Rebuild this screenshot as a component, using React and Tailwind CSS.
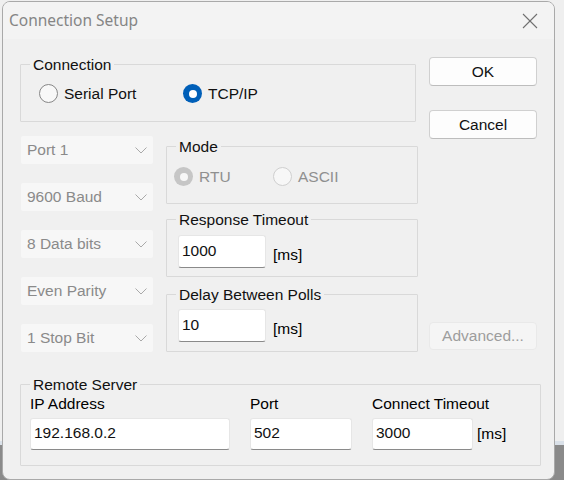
import React from "react";

const F = "font-['Liberation_Sans',Arial,sans-serif]";

function Radio({ checked, disabled, label, className = "" }) {
  let circle;
  if (checked && !disabled) {
    circle = (
      <span className="w-[19px] h-[19px] rounded-full bg-[#005fb8] flex items-center justify-center shrink-0">
        <span className="w-[8px] h-[8px] rounded-full bg-white" />
      </span>
    );
  } else if (checked && disabled) {
    circle = (
      <span className="w-[19px] h-[19px] rounded-full bg-[#c6c6c6] flex items-center justify-center shrink-0">
        <span className="w-[8px] h-[8px] rounded-full bg-[#f7f7f7]" />
      </span>
    );
  } else if (disabled) {
    circle = <span className="w-[19px] h-[19px] rounded-full bg-[#f7f7f7] border border-[#cfcfcf] shrink-0" />;
  } else {
    circle = <span className="w-[19px] h-[19px] rounded-full bg-[#f8f8f8] border border-[#878787] shrink-0" />;
  }
  return (
    <div className={"flex items-center " + className}>
      {circle}
      <span className={"ml-[6px] " + (disabled ? "text-[#8f8f8f]" : "text-[#111]")}>{label}</span>
    </div>
  );
}

function Group({ label, className = "", children }) {
  return (
    <fieldset className={"border border-[#d9d9d9] rounded-[1px] " + className}>
      <legend className="ml-[9px] px-[3px] pt-[2px] leading-[16px] text-[#111]">{label}</legend>
      {children}
    </fieldset>
  );
}

function Combo({ label }) {
  return (
    <div className="h-[28px] w-[132px] bg-[#f7f7f7] rounded-[2px] flex items-center justify-between pl-[6px] pr-[6px] text-[#8a8a8a]">
      <span>{label}</span>
      <svg width="12" height="7" viewBox="0 0 12 7" fill="none">
        <polyline points="0.5,0.5 6,6 11.5,0.5" stroke="#a9a9a9" strokeWidth="1" />
      </svg>
    </div>
  );
}

function Input({ value, className = "" }) {
  return (
    <div
      className={
        "bg-white border border-[#e6e6e6] border-b-[#8a8a8a] rounded-[3px] flex items-center pl-[3px] pb-[2px] text-[#111] " +
        className
      }
    >
      {value}
    </div>
  );
}

function Button({ label, disabled, className = "" }) {
  return (
    <div
      className={
        "w-[108px] rounded-[4px] border flex items-center justify-center " +
        (disabled
          ? "bg-[#f5f5f5] border-[#e9e9e9] text-[#9d9d9d] "
          : "bg-[#fdfdfd] border-[#d0d0d0] border-b-[#bdbdbd] text-[#111] ") +
        className
      }
    >
      {label}
    </div>
  );
}

export default function App() {
  return (
    <div className={"grid w-[564px] h-[480px] overflow-hidden text-[15.5px] leading-[16px] " + F}>
      {/* Desktop behind the dialog */}
      <div className="col-start-1 row-start-1 flex flex-col h-[480px]">
        <div className="h-[441px] bg-[#efefef]" />
        <div className="h-[4px] bg-[#dae1e9]" />
        <div className="flex-1 bg-[#8a8a8a]" />
      </div>

      <div className="col-start-1 row-start-1 pt-[1px] pl-[2px]">
        <div className="w-[553px] h-[479px] rounded-[8px] border border-[#a9a9a9] bg-[#f0f0f0] overflow-hidden">
          {/* Title bar */}
          <div className="h-[37px] bg-[#f3f3f3] flex items-center justify-between pl-[6px] pr-[16px]">
            <span className="font-['Noto_Sans',sans-serif] text-[15.5px] text-[#858585] mt-[-1px]">Connection Setup</span>
            <svg width="16" height="16" viewBox="0 0 16 16" fill="none">
              <line x1="1" y1="1" x2="15" y2="15" stroke="#707070" strokeWidth="1.1" />
              <line x1="15" y1="1" x2="1" y2="15" stroke="#707070" strokeWidth="1.1" />
            </svg>
          </div>

          {/* Body */}
          <div className="pl-[17px] pt-[16px]">
            <div className="flex">
              {/* Left column */}
              <div className="w-[397px]">
                <Group label="Connection" className="w-[396px] h-[67px]">
                  <div className="flex mt-[11px] ml-[18px]">
                    <Radio label="Serial Port" className="w-[144px]" />
                    <Radio label="TCP/IP" checked />
                  </div>
                </Group>

                <div className="flex mt-[15px]">
                  <div className="ml-[1px] mt-[-1px] w-[132px] flex flex-col gap-[19px]">
                    <Combo label="Port 1" />
                    <Combo label="9600 Baud" />
                    <Combo label="8 Data bits" />
                    <Combo label="Even Parity" />
                    <Combo label="1 Stop Bit" />
                  </div>

                  <div className="ml-[13px] w-[252px] flex flex-col">
                    <Group label="Mode" className="w-[252px] h-[67px]">
                      <div className="flex mt-[12px] ml-[7px]">
                        <Radio label="RTU" checked disabled className="w-[99px]" />
                        <Radio label="ASCII" disabled />
                      </div>
                    </Group>

                    <Group label="Response Timeout" className="w-[252px] h-[67px] mt-[6px]">
                      <div className="flex mt-[7px] ml-[11px]">
                        <Input value="1000" className="w-[88px] h-[33px]" />
                        <span className="ml-[7px] self-end mb-[5px]">[ms]</span>
                      </div>
                    </Group>

                    <Group label="Delay Between Polls" className="w-[252px] h-[67px] mt-[8px]">
                      <div className="flex mt-[6px] ml-[11px]">
                        <Input value="10" className="w-[88px] h-[33px]" />
                        <span className="ml-[7px] self-end mb-[5px]">[ms]</span>
                      </div>
                    </Group>
                  </div>
                </div>
              </div>

              {/* Right column */}
              <div className="ml-[12px] flex flex-col">
                <Button label="OK" className="mt-[2px] h-[29px]" />
                <Button label="Cancel" className="mt-[24px] h-[29px]" />
                <Button label="Advanced..." disabled className="mt-[183px] h-[28px]" />
              </div>
            </div>

            {/* Remote Server */}
            <Group label="Remote Server" className="w-[521px] h-[91px] mt-[23px]">
              <div className="flex pl-[9px] mt-[3px]">
                <div className="w-[200px]">
                  <div className="leading-[16px]">IP Address</div>
                  <Input value="192.168.0.2" className="mt-[6px] w-[200px] h-[32px]" />
                </div>
                <div className="ml-[20px] w-[102px]">
                  <div className="leading-[16px]">Port</div>
                  <Input value="502" className="mt-[6px] w-[102px] h-[32px]" />
                </div>
                <div className="ml-[20px]">
                  <div className="leading-[16px]">Connect Timeout</div>
                  <div className="flex items-center mt-[6px]">
                    <Input value="3000" className="w-[101px] h-[32px]" />
                    <span className="ml-[4px]">[ms]</span>
                  </div>
                </div>
              </div>
            </Group>
          </div>
        </div>
      </div>
    </div>
  );
}
